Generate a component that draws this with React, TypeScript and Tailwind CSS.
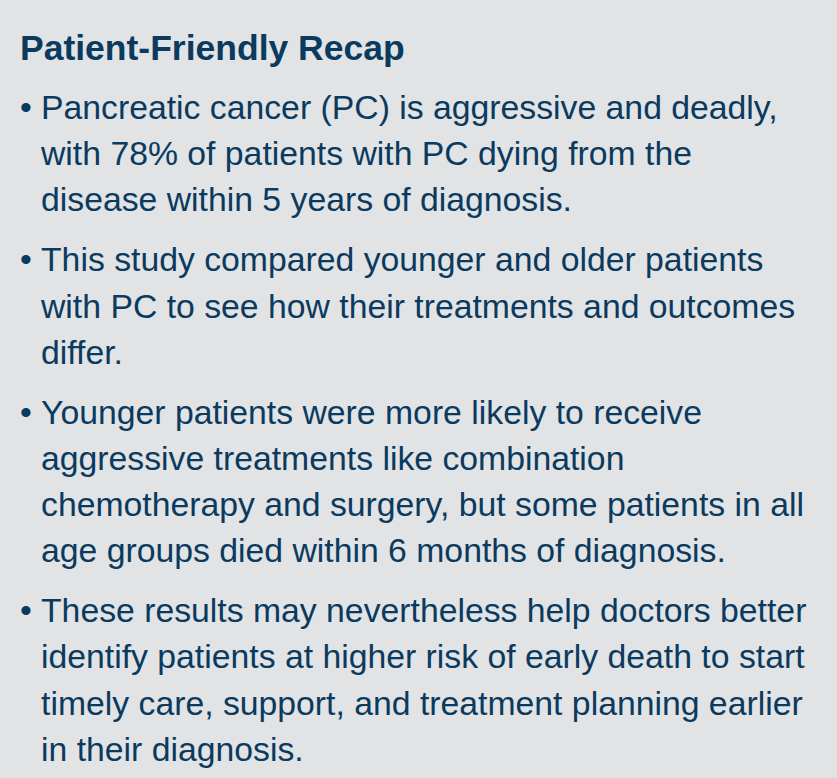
const points = [
  "Pancreatic cancer (PC) is aggressive and deadly, with 78% of patients with PC dying from the disease within 5 years of diagnosis.",
  "This study compared younger and older patients with PC to see how their treatments and outcomes differ.",
  "Younger patients were more likely to receive aggressive treatments like combination chemotherapy and surgery, but some patients in all age groups died within 6 months of diagnosis.",
  "These results may nevertheless help doctors better identify patients at higher risk of early death to start timely care, support, and treatment planning earlier in their diagnosis.",
];

export default function App() {
  return (
    <div
      className="min-h-[778px] w-full bg-[#e1e3e5] pl-[20px] pr-[27px] pt-[27px] text-[#0b3a5f]"
      style={{ fontFamily: '"Liberation Sans", Arial, sans-serif' }}
    >
      <h1 className="text-[35.5px] font-bold leading-[42px]">Patient-Friendly Recap</h1>
      <ul className="mt-[15px] flex flex-col gap-[13.7px]">
        {points.map((p) => (
          <li key={p} className="flex text-[33.75px] leading-[46.2px]">
            <span className="w-[21px] shrink-0">•</span>
            <span>{p}</span>
          </li>
        ))}
      </ul>
    </div>
  );
}
